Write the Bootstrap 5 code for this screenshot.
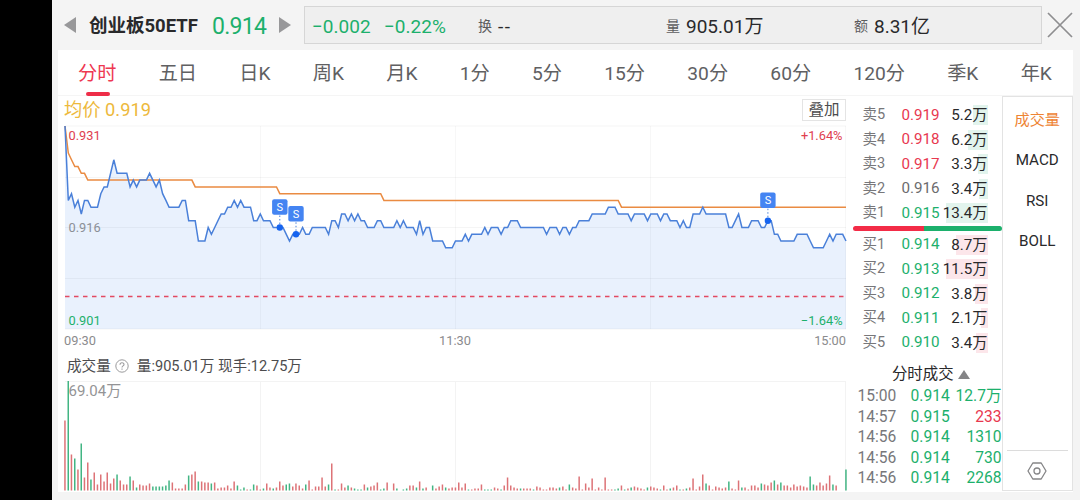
<!DOCTYPE html>
<html lang="zh-CN">
<head>
  <meta charset="UTF-8" />
  <meta name="viewport" content="width=device-width, initial-scale=1.0" />
  <title>创业板50ETF</title>
  <link href="https://cdn.jsdelivr.net/npm/bootstrap@5.3.3/dist/css/bootstrap.min.css" rel="stylesheet">
  <style>
    body {
      width: 1080px;
      height: 500px;
      padding-left: 52px;
      overflow: hidden;
      background: #000;
      color: #29292b;
      font-family: Roboto, "Noto Sans CJK SC", sans-serif;
      line-height: 1;
      white-space: nowrap;
    }

    svg { display: block; }
    svg text { font-family: Roboto, "Noto Sans CJK SC", sans-serif; }

    .app { height: 500px; padding-right: 7px; padding-left: 6px; background: #f4f4f4; }

    .up { color: #e8384f; }
    .down { color: #1cb06c; }
    .flat { color: #6b6b6d; }

    .topbar { height: 50px; padding: 0 0 0 6px; }
    .fund-name { width: 110px; margin-left: 13px; padding-top: 3px; font-size: 18.5px; font-weight: 700; }
    .fund-price { width: 55px; margin: 0 12px 0 13px; padding-top: 3px; font-size: 23px; letter-spacing: -.7px; }
    .stats { width: 738px; height: 38px; margin-left: 13px; padding: 2px 0 0 7px; border: 1px solid #d6d6d6; background: #efefef; font-size: 19px; }
    .stats small { margin-right: 6px; font-size: 14px; color: #5c5c5e; }
    .stat-change { width: 72px; }
    .stat-pct { width: 94px; }
    .stat-turn { width: 188px; }
    .stat-vol { width: 188px; }
    .dashes { letter-spacing: 1.6px; }

    .panel { height: 442px; background: #fff; }
    .tabs { height: 46px; padding: 0 21px 0 20px; border-bottom: 1px solid #f5f5f5; font-size: 19.2px; color: #606062; }
    .tab-item { height: 46px; line-height: 48px; position: relative; }
    .tab-item.active { color: #ee3851; }
    .tab-item.active::after { content: ""; position: absolute; left: 8px; bottom: 0; width: 24px; height: 4px; border-radius: 2px; background: #ee2d48; }

    .charts { width: 795px; padding-left: 6px; }
    .avg-row { height: 27px; width: 782px; padding-top: 1px; font-size: 18.3px; color: #edb93c; }
    .overlay-btn { width: 44px; height: 22px; padding-top: 1px; border: 1px solid #e4e4e4; font-size: 15.5px; color: #4c4c4e; }
    .time-axis { width: 782px; height: 20px; font-size: 12.8px; color: #8b8b8d; }
    .vol-head { height: 30px; padding-left: 3px; font-size: 14.6px; color: #4c4c4e; }

    .book { width: 148.5px; }
    .level { height: 24.5px; padding: 0 14px 0 9.5px; font-size: 15.2px; }
    .level-side { width: 39px; font-size: 14.5px; color: #77777a; }
    .level-price { width: 41px; }
    .level-qty { flex: 1; height: 20px; line-height: 20px; text-align: right; background-repeat: no-repeat; background-position: right; }
    .depth-sell { background-image: linear-gradient(#e2f4ed, #e2f4ed); }
    .depth-buy { background-image: linear-gradient(#fce6ea, #fce6ea); }
    .sell-levels { padding-top: 7px; }
    .power-bar { height: 5px; margin: 0 0 2px; border-radius: 3px; overflow: hidden; }
    .power-buy { width: 48%; background: #f32c47; }
    .power-sell { background: #1cb06c; }
    .trade-title { height: 31.5px; padding: 7px 0 0 7px; font-size: 15.4px; }
    .trade { height: 20.6px; padding-left: 4.5px; font-size: 15.6px; }
    .trade-time { width: 53px; color: #77777a; }

    .indicators { width: 71.5px; height: 395px; border: 1px solid #e3e3e3; font-size: 15.2px; }
    .indicator { height: 40.3px; padding-top: 7px; }
    .indicator.active { color: #ee8434; }
    .settings { height: 40px; margin: 0 4px; border-top: 1px solid #dcdcdc; }
  </style>
</head>
<body>

  <div class="app">
    <div class="topbar d-flex align-items-center">
      <svg width="12" height="16"><path d="M12 0V16L0 8z" fill="#98989a"/></svg>
      <div class="fund-name">创业板50ETF</div>
      <div class="fund-price down">0.914</div>
      <svg width="12" height="16"><path d="M0 0V16L12 8z" fill="#98989a"/></svg>
      <div class="stats d-flex align-items-center">
        <div class="stat-change down">−0.002</div>
        <div class="stat-pct down">−0.22%</div>
        <div class="stat-turn d-flex align-items-center"><small>换</small><span class="dashes">--</span></div>
        <div class="stat-vol d-flex align-items-center"><small>量</small>905.01万</div>
        <div class="d-flex align-items-center"><small>额</small>8.31亿</div>
      </div>
      <svg class="ms-auto" width="26" height="26"><path d="M1 1L25 25M25 1L1 25" stroke="#8e8e90" stroke-width="1.7" fill="none"/></svg>
    </div>

    <div class="panel">
      <div class="tabs d-flex justify-content-between">
        <div class="tab-item active">分时</div>
        <div class="tab-item">五日</div>
        <div class="tab-item">日K</div>
        <div class="tab-item">周K</div>
        <div class="tab-item">月K</div>
        <div class="tab-item">1分</div>
        <div class="tab-item">5分</div>
        <div class="tab-item">15分</div>
        <div class="tab-item">30分</div>
        <div class="tab-item">60分</div>
        <div class="tab-item">120分</div>
        <div class="tab-item">季K</div>
        <div class="tab-item">年K</div>
      </div>

      <div class="d-flex">
        <div class="charts">
          <div class="avg-row d-flex align-items-center justify-content-between">
            <span>均价 0.919</span>
            <span class="overlay-btn d-flex align-items-center justify-content-center">叠加</span>
          </div>
          <svg id="priceChart" width="784" height="208"></svg>
          <div class="time-axis d-flex align-items-center justify-content-between">
            <span>09:30</span><span>11:30</span><span>15:00</span>
          </div>
          <div class="vol-head d-flex align-items-center">
            <span>成交量</span>
            <svg class="mx-1" width="14" height="14" viewBox="0 0 14 14" fill="none" stroke="#9a9a9c">
              <circle cx="7" cy="7" r="6.2"/>
              <path d="M5 5.7C5 3.1 9 3.1 9 5.5C9 7 7 6.8 7 8.5M7 9.6V10.8" stroke-width="1.1"/>
            </svg>
            <span class="ms-1">量:905.01万 现手:12.75万</span>
          </div>
          <svg id="volumeChart" width="784" height="111"></svg>
        </div>

        <div class="book">
          <div id="sellLevels" class="sell-levels"></div>
          <div class="power-bar d-flex">
            <div class="power-buy"></div>
            <div class="power-sell flex-fill"></div>
          </div>
          <div id="buyLevels"></div>
          <div class="trade-title d-flex align-items-center justify-content-center gap-1">
            分时成交<svg width="12" height="9"><path d="M6 0L12 9H0z" fill="#858587"/></svg>
          </div>
          <div id="trades"></div>
        </div>

        <div class="indicators d-flex flex-column">
          <div class="indicator active d-flex align-items-center justify-content-center">成交量</div>
          <div class="indicator d-flex align-items-center justify-content-center">MACD</div>
          <div class="indicator d-flex align-items-center justify-content-center">RSI</div>
          <div class="indicator d-flex align-items-center justify-content-center">BOLL</div>
          <div class="settings mt-auto d-flex align-items-center justify-content-center">
            <svg width="20" height="18" viewBox="0 0 20 18" fill="none" stroke="#858587" stroke-width="1.3">
              <path d="M5.8 1H14.2L19 9L14.2 17H5.8L1 9z" stroke-linejoin="round"/>
              <circle cx="10" cy="9" r="3"/>
            </svg>
          </div>
        </div>
      </div>
    </div>
  </div>

  <script src="https://cdn.jsdelivr.net/npm/bootstrap@5.3.3/dist/js/bootstrap.bundle.min.js"></script>
  <script>
    // [minute, ticks above the 0.916 close]
    const price = [
      [0,15],[1,4],[2,5],[3,3],[4,4],[5,2],[6,4],[7,4],[8,3],[10,3],[11,5],[12,6],[13,6],[14,8],[15,10],[16,8],[19,8],
      [20,6],[21,7],[22,6],[23,7],[25,7],[26,8],[27,7],[28,6],[29,7],[30,5],[31,4],[32,3],[35,3],[36,4],[37,4],[38,1],
      [40,1],[41,-2],[43,-2],[44,0],[45,-1],[46,0],[47,1],[48,2],[49,2],[50,3],[51,3],[52,4],[53,3],[54,4],[55,3],[57,3],
      [58,1],[59,1],[60,2],[61,1],[63,1],[64,0],[67,0],[68,-1],[69,-2],[70,-1],[72,-1],[73,0],[74,-1],[75,-1],[76,0],
      [80,0],[81,-1],[82,1],[83,1],[84,0],[85,2],[86,2],[87,1],[88,2],[89,1],[90,2],[91,1],[92,1],[93,0],[95,0],[96,1],
      [97,1],[98,0],[101,0],[102,1],[103,0],[104,1],[105,0],[107,0],[108,-1],[109,1],[110,-1],[111,0],[112,0],[113,-2],
      [116,-2],[117,-3],[119,-3],[120,-2],[122,-2],[123,-1],[124,-2],[125,-1],[128,-1],[129,0],[130,-1],[131,0],[133,0],
      [134,-1],[135,0],[136,0],[137,1],[139,1],[140,0],[147,0],[148,-1],[149,0],[151,0],[152,-1],[153,0],[154,0],[155,-1],
      [156,0],[157,0],[158,1],[161,1],[162,2],[166,2],[167,3],[169,3],[170,2],[173,2],[174,1],[175,2],[178,2],[179,1],
      [180,2],[182,2],[183,1],[184,2],[185,2],[186,1],[188,1],[189,0],[190,1],[191,0],[192,0],[193,2],[195,2],[196,3],
      [197,2],[203,2],[204,0],[205,0],[206,1],[207,2],[208,0],[210,0],[211,1],[213,1],[214,0],[215,0],[216,1],[217,1],
      [218,-1],[219,-1],[220,-2],[224,-2],[225,-1],[228,-1],[229,-2],[230,-3],[233,-3],[234,-2],[235,-1],[236,-2],
      [237,-1],[239,-1],[240,-2]
    ];
    const average = [[0,15],[1,11],[2,10],[3,9],[4,9],[5,8],[6,8],[7,7],[39,7],[40,6],[65,6],[66,5],[97,5],[98,4],[170,4],[171,3],[240,3]];
    const sells = [[66, 0], [71, -1], [216, 1]];

    // one bar per minute, r = up, g = down
    const volume = ('r70 g110 r36 g32 r21 g47 r13 r28 g11 r18 r6 r16 r9 r18 r7 r12 g16 r10 r6 r6 g14 r10 g3 r6 r5 r5 r7 g4 g4 g4 ' +
      'g4 g5 g10 r8 r2 r2 r2 r6 g15 r16 r19 g9 r9 r8 r8 g7 r8 r2 r3 r3 r5 r2 r9 g5 g1 g3 r1 g1 g6 r5 ' +
      'r1 g2 r7 r3 g2 r3 r9 r5 g6 g7 r4 r7 r5 r2 g6 r10 r1 r4 r4 r13 r4 g6 r27 g1 r1 r7 r3 g5 r3 g2 ' +
      'g1 g1 r6 g3 r4 r5 r8 g1 g2 r8 r0 r7 g2 r0 g1 g2 r5 r5 g3 r9 g2 r3 g0 g5 r2 r4 r6 g3 r2 r3 ' +
      'r3 r8 r3 r7 g1 r1 r2 r2 r6 g1 g1 g1 r3 r2 g1 r5 r13 r5 r3 r2 g2 r2 r2 r2 g1 r4 r3 r1 r1 r3 ' +
      'r3 r2 g3 r4 r1 g6 r3 r2 r14 r1 r7 r3 r12 r1 r3 r1 r13 r1 r1 g1 g2 r5 g1 r2 g3 r4 r3 r2 r1 g3 ' +
      'r4 r3 r2 g1 r5 r1 g2 r3 r5 g1 r1 g2 r3 r12 r1 r4 r16 g7 r5 r1 r4 r3 r2 r3 g9 r2 r1 r10 g3 r3 ' +
      'r1 r5 r5 r3 g7 r6 r5 r8 g10 r6 g8 r5 r5 r3 r6 r4 r5 r4 r3 g14 g6 r5 r8 r5 r7 r15 g6 r5 r0 r0 g21').split(' ');

    const step = 781 / 240;
    const px = i => (i * step + 1).toFixed(1);
    const py = k => (104.5 - k * 6.77).toFixed(1);
    const line = pts => pts.map(p => px(p[0]) + ',' + py(p[1])).join(' ');

    let grid = '';
    [3, 54.5, 104.5, 155.5, 206].forEach(y => grid += `<path d="M1 ${y}H782" stroke="#000" stroke-opacity=".04"/>`);
    [196.5, 391.5, 586.5, 781.5].forEach(x => grid += `<path d="M${x} 3V206" stroke="#000" stroke-opacity=".03"/>`);

    document.getElementById('priceChart').innerHTML = `
      <polygon points="1,206 ${line(price)} 782,206" fill="#e9f1fd"/>
      ${grid}
      <path d="M1 173.5H782" stroke="#e34a62" stroke-width="1.3" stroke-dasharray="4.5 4.5"/>
      <polyline points="${line(average)}" fill="none" stroke="#ea8b42" stroke-width="1.5"/>
      <polyline points="${line(price)}" fill="none" stroke="#4a80d9" stroke-width="1.5"/>
      ${sells.map(([i, k]) => `
        <path d="M${px(i)} ${py(k)}v-14" stroke="#4a80d9" stroke-dasharray="1.5 2"/>
        <circle cx="${px(i)}" cy="${py(k)}" r="3.2" fill="#1664f0"/>
        <rect x="${px(i) - 7.7}" y="${py(k) - 28.3}" width="15.4" height="15.6" rx="2" fill="#4484f2"/>
        <text x="${px(i)}" y="${py(k) - 16.5}" font-size="11" fill="#fff" text-anchor="middle">S</text>`).join('')}
      <g font-size="12.8">
        <text x="4.5" y="17" fill="#e0404f">0.931</text>
        <text x="4.5" y="109" fill="#8b8f97">0.916</text>
        <text x="4.5" y="202" fill="#1cb06c">0.901</text>
        <text x="778.5" y="17" fill="#e0404f" text-anchor="end">+1.64%</text>
        <text x="778.5" y="202" fill="#1cb06c" text-anchor="end">−1.64%</text>
      </g>`;

    document.getElementById('volumeChart').innerHTML =
      '<path d="M1 .5H782M196.5 0V110M391.5 0V110M586.5 0V110M781.5 0V110" stroke="#f3f3f3"/>' +
      volume.map((v, i) => {
        const h = +v.slice(1);
        return `<rect x="${px(i) - .8}" y="${109.5 - h}" width="1.5" height="${h}" fill="${v[0] === 'r' ? '#dd7377' : '#42b583'}"/>`;
      }).join('') +
      '<text x="4.5" y="15" font-size="15" fill="#949496">69.04万</text>';

    // side, price, size, colour, depth width
    const sellLevels = [
      ['卖5', '0.919', '5.2万', 'up', 15], ['卖4', '0.918', '6.2万', 'up', 20], ['卖3', '0.917', '3.3万', 'up', 10],
      ['卖2', '0.916', '3.4万', 'flat', 9], ['卖1', '0.915', '13.4万', 'down', 42]
    ];
    const buyLevels = [
      ['买1', '0.914', '8.7万', 'down', 32], ['买2', '0.913', '11.5万', 'down', 42], ['买3', '0.912', '3.8万', 'down', 13],
      ['买4', '0.911', '2.1万', 'down', 7], ['买5', '0.910', '3.4万', 'down', 12]
    ];
    const trades = [
      ['15:00', '0.914', '12.7万', 'down'], ['14:57', '0.915', '233', 'up'], ['14:56', '0.914', '1310', 'down'],
      ['14:56', '0.914', '730', 'down'], ['14:56', '0.914', '2268', 'down']
    ];

    const levelRow = (l, depth) => `
      <div class="level d-flex align-items-center">
        <span class="level-side">${l[0]}</span>
        <span class="level-price ${l[3]}">${l[1]}</span>
        <span class="level-qty ${depth}" style="background-size: ${l[4]}px 100%">${l[2]}</span>
      </div>`;

    document.getElementById('sellLevels').innerHTML = sellLevels.map(l => levelRow(l, 'depth-sell')).join('');
    document.getElementById('buyLevels').innerHTML = buyLevels.map(l => levelRow(l, 'depth-buy')).join('');
    document.getElementById('trades').innerHTML = trades.map(t => `
      <div class="trade d-flex align-items-center">
        <span class="trade-time">${t[0]}</span>
        <span class="down">${t[1]}</span>
        <span class="ms-auto ${t[3]}">${t[2]}</span>
      </div>`).join('');
  </script>

</body>
</html>
